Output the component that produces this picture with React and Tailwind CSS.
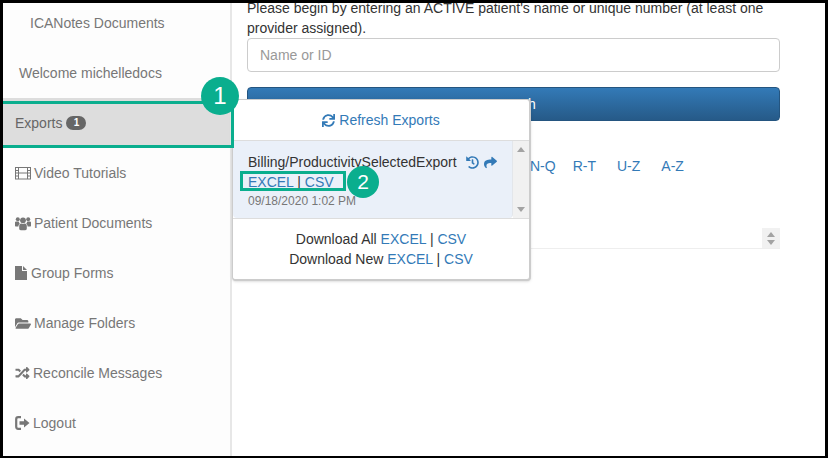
import React from "react";
import { FaFolderOpen, FaRandom, FaSync, FaHistory, FaShare } from "react-icons/fa";

const Item = ({ icon, children, pad = "pl-3", gap = "gap-1" }) => (
  <div className={`h-[50px] flex items-center ${pad} ${gap} text-[#777]`}>
    {icon}
    <span>{children}</span>
  </div>
);

const A = ({ children }) => <span className="text-[#337ab7]">{children}</span>;

const Film = () => (
  <svg width="16" height="14" viewBox="0 0 16 14" fill="none" stroke="#777" strokeWidth="1" className="shrink-0">
    <rect x="0.5" y="1.5" width="15" height="11.5" />
    <path d="M3.5 1.5V13M12.5 1.5V13M3.5 7h9M0.5 4.5h3M0.5 7h3M0.5 10h3M12.5 4.5h3M12.5 7h3M12.5 10h3" />
  </svg>
);

const Users = () => (
  <svg width="16" height="15" viewBox="0 0 16 15" fill="#777" className="shrink-0">
    <circle cx="2.8" cy="3.2" r="2" />
    <circle cx="13.2" cy="3.2" r="2" />
    <path d="M0 6.6C0 5.8.8 5.6 1.5 5.6h2.2c.2.8.6 1.6 1.1 2.2-.8.5-1.3 1.4-1.4 2.6H1C.3 10.4 0 10 0 9.4zM16 6.6c0-.8-.8-1-1.5-1h-2.2c-.2.8-.6 1.6-1.1 2.2.8.5 1.3 1.4 1.4 2.6H15c.7 0 1-.4 1-1z" />
    <circle cx="8" cy="4.3" r="2.9" />
    <path d="M4.2 10.2c0-1.6.9-2.6 2-2.6.5.3 1.1.5 1.8.5s1.3-.2 1.8-.5c1.1 0 2 1 2 2.6v2.4c0 1-.6 1.6-1.6 1.6H5.8c-1 0-1.6-.6-1.6-1.6z" />
  </svg>
);

const FileIcon = () => (
  <svg width="12" height="14" viewBox="0 0 12 14" fill="#777" className="shrink-0">
    <path d="M0 0h7v5h5v9H0zM8 0l4 4H8z" />
  </svg>
);

const Logout = () => (
  <svg width="15" height="14" viewBox="0 0 15 14" fill="none" className="shrink-0">
    <path d="M6 1.2H3.2C2 1.2 1.2 2 1.2 3.2v7.6c0 1.2.8 2 2 2H6" stroke="#777" strokeWidth="2.2" />
    <path d="M4.5 5.2H9V2.4L14.5 7 9 11.6V8.8H4.5z" fill="#777" />
  </svg>
);

const Arrows = () => (
  <>
    <span className="w-0 h-0 border-x-[4px] border-x-transparent border-b-[5px] border-b-[#a3a3a3]" />
    <span className="w-0 h-0 border-x-[4px] border-x-transparent border-t-[5px] border-t-[#a3a3a3]" />
  </>
);

export default function App() {
  return (
    <div className="relative w-[828px] h-[458px] overflow-hidden bg-white border-t-[3px] border-l-[3px] border-r-[3px] border-b-[2px] border-black box-border text-[14px] leading-5 text-[#333] font-['Liberation_Sans',Arial,sans-serif]">
      <div className="flex h-full -mt-[5px]">
        <aside className="w-[229px] shrink-0 h-[470px] bg-[#fdfdfd] border-r-2 border-[#e7e7e7]">
          <Item pad="pl-[27px]">ICANotes Documents</Item>
          <Item pad="pl-[16px]">Welcome michelledocs</Item>
          <div className="h-[50px] flex items-center pl-3 gap-1 bg-[#ddd] text-[#666]">
            <span>Exports</span>
            <span className="w-5 h-[14px] rounded-full bg-[#666] text-white text-[10px] leading-[14px] font-bold text-center">1</span>
          </div>
          <Item gap="gap-[3px]" icon={<Film />}>Video Tutorials</Item>
          <Item gap="gap-[3px]" icon={<Users />}>Patient Documents</Item>
          <Item gap="gap-[4px]" icon={<FileIcon />}>Group Forms</Item>
          <Item gap="gap-[3px]" icon={<FaFolderOpen className="w-[16px] h-[15px] shrink-0" />}>Manage Folders</Item>
          <Item gap="gap-[3px]" icon={<FaRandom className="w-[15px] h-[14px] shrink-0" />}>Reconcile Messages</Item>
          <Item gap="gap-[3px]" icon={<Logout />}>Logout</Item>
        </aside>
        <main className="w-[533px] ml-[15px] shrink-0">
          <p className="w-[540px]">Please begin by entering an ACTIVE patient's name or unique number (at least one<br />provider assigned).</p>
          <div className="h-[34px] rounded border border-[#ccc] flex items-center px-3 text-[#999]">Name or ID</div>
          <div className="mt-[15px] h-[34px] rounded bg-gradient-to-b from-[#337ab7] to-[#265a88] border border-[#245580] flex items-center justify-center text-white">Search</div>
          <div className="mt-[35px] flex pl-[283px] text-[#337ab7]">
            <span>N-Q</span><span className="ml-[17px]">R-T</span><span className="ml-[21px]">U-Z</span><span className="ml-[21px]">A-Z</span>
          </div>
          <div className="mt-[52px] h-[21px] border-b border-[#eee] flex justify-end">
            <div className="w-[18px] h-5 bg-[#f1f1f1] flex flex-col items-center justify-center gap-[3px]">
              <Arrows />
            </div>
          </div>
        </main>
      </div>

      {/* Exports popover */}
      <div className="absolute left-[229px] top-[96px] w-[299px] h-[182px] bg-white border border-[#ccc] border-r-2 border-b-2 rounded-sm shadow-sm flex flex-col">
        <div className="h-[41px] flex items-center justify-center gap-1 text-[#337ab7] border-b border-[#ddd]">
          <FaSync className="w-[13px] h-[13px]" />
          <span>Refresh Exports</span>
        </div>
        <div className="h-[77px] flex">
          <div className="w-[280px] bg-[#eaf0f9] rounded-b pl-[15px] pt-[11px] border-r border-[#e3e6ea]">
            <div className="flex items-center">
              <span>Billing/ProductivitySelectedExport</span>
              <FaHistory className="ml-[9px] w-[13px] h-[13px] text-[#337ab7]" />
              <FaShare className="ml-[4px] w-[15px] h-[13px] text-[#337ab7]" />
            </div>
            <div><A>EXCEL</A> | <A>CSV</A></div>
            <div className="text-[12px] leading-[18px] text-[#777]">09/18/2020 1:02 PM</div>
          </div>
          <div className="flex-1 bg-[#f1f1f1] flex flex-col items-center justify-between py-[6px]">
            <Arrows />
          </div>
        </div>
        <div className="flex-1 border-t border-[#ddd] pt-[10px] text-center">
          <div>Download All <A>EXCEL</A> | <A>CSV</A></div>
          <div>Download New <A>EXCEL</A> | <A>CSV</A></div>
        </div>
      </div>

      {/* Annotations */}
      <div className="absolute -left-[3px] top-[98px] w-[234px] h-[47px] border-[3px] border-[#0aae8e]" />
      <div className="absolute left-[198px] top-[74px] w-[38px] h-[38px] rounded-full bg-[#0aae8e] text-white text-[24px] flex items-center justify-center">1</div>
      <div className="absolute left-[237px] top-[168px] w-[106px] h-[20px] border-[3px] border-[#0aae8e]" />
      <div className="absolute left-[344px] top-[163px] w-[32px] h-[32px] rounded-full bg-[#0aae8e] text-white text-[21px] flex items-center justify-center">2</div>
    </div>
  );
}
